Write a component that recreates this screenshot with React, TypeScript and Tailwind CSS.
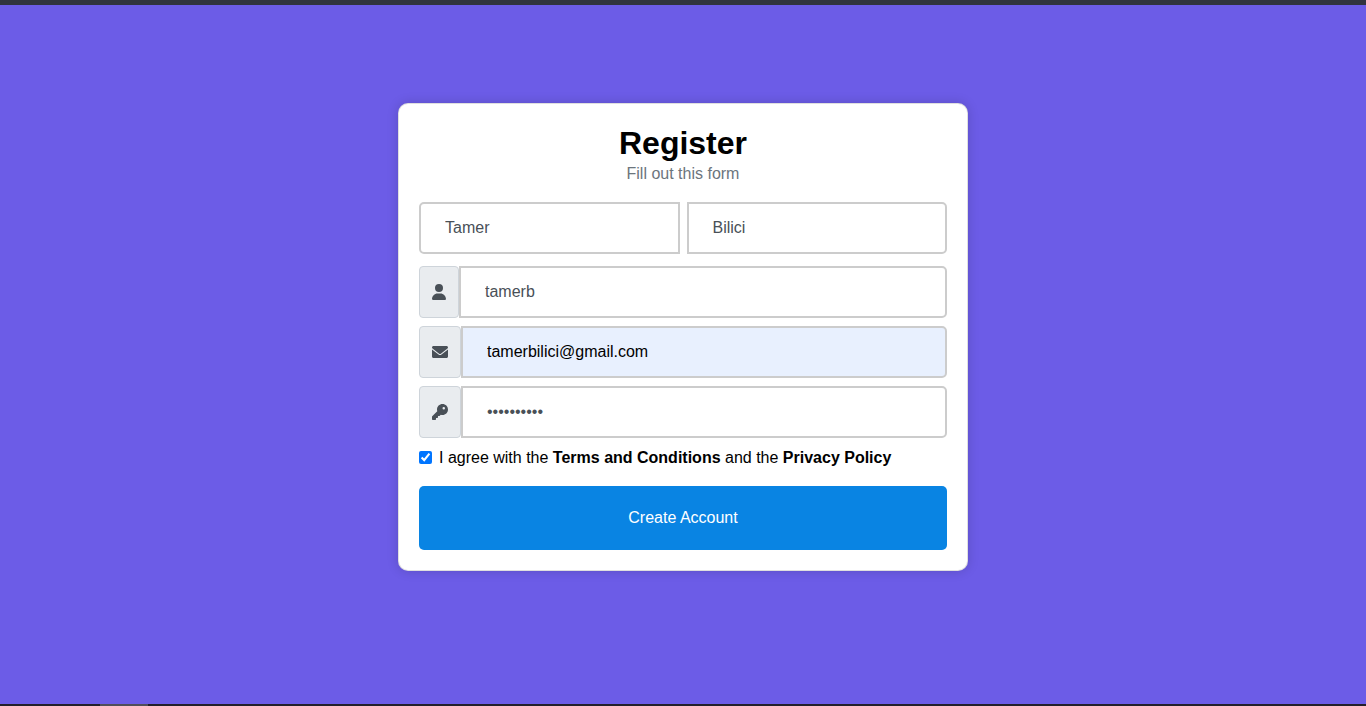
import type { ReactNode } from "react";
import { FaKey, FaUser } from "react-icons/fa6";

const fieldBase =
  "block h-[52px] w-full min-w-0 border-2 border-[#cccccc] px-6 text-base outline-none focus:border-[#0984e3]";

function EnvelopeIcon() {
  return (
    <svg viewBox="0 0 512 512" fill="currentColor" aria-hidden="true" className="size-4">
      <path d="M256 352c-16.53 0-33.06-5.422-47.16-16.41L0 173.2V400C0 426.5 21.49 448 48 448h416c26.51 0 48-21.49 48-48V173.2l-208.8 162.5C289.1 346.6 272.5 352 256 352zM16.29 145.3l212.1 164.1c16.19 12.6 38.87 12.6 55.06 0l212.1-164.1C505.1 137.3 512 125 512 112C512 85.49 490.5 64 464 64h-416C21.49 64 0 85.49 0 112C0 125 6.01 137.3 16.29 145.3z" />
    </svg>
  );
}

type IconFieldProps = {
  id: string;
  label: string;
  type: string;
  value: string;
  icon: ReactNode;
  autoComplete: string;
  tone?: string;
};

function IconField({ id, label, type, value, icon, autoComplete, tone = "bg-white text-[#495057]" }: IconFieldProps) {
  return (
    <div className="flex">
      <label
        htmlFor={id}
        aria-label={label}
        className="flex shrink-0 items-center rounded-[4px] border border-[#ced4da] bg-[#e9ecef] px-3 text-base text-[#495057]"
      >
        {icon}
      </label>
      <input
        id={id}
        type={type}
        defaultValue={value}
        autoComplete={autoComplete}
        className={`${fieldBase} rounded-r-[5px] ${tone}`}
      />
    </div>
  );
}

export default function App() {
  return (
    <div className="flex min-h-screen flex-col bg-[#6c5ce7] font-['Liberation_Sans',Arial,sans-serif] text-base text-black">
      <div className="h-[5px] bg-[#31343f]" />
      <main className="flex-1 px-4 pt-[98px] pb-8">
        <form
          onSubmit={(event) => event.preventDefault()}
          className="mx-auto max-w-[570px] rounded-[10px] border border-black/[0.125] bg-white bg-clip-border p-5 shadow-[0_0_12px_rgba(0,0,0,0.16)]"
        >
          <header className="mb-4 text-center">
            <h1 className="text-[32px] leading-[38px] font-bold">Register</h1>
            <p className="leading-6 text-[#6c757d]">Fill out this form</p>
          </header>

          <div className="mb-3 grid grid-cols-2 gap-[7px]">
            <input
              aria-label="First name"
              type="text"
              defaultValue="Tamer"
              autoComplete="given-name"
              className={`${fieldBase} rounded-l-[5px] bg-white text-[#495057]`}
            />
            <input
              aria-label="Last name"
              type="text"
              defaultValue="Bilici"
              autoComplete="family-name"
              className={`${fieldBase} rounded-r-[5px] bg-white text-[#495057]`}
            />
          </div>

          <div className="mb-2 flex flex-col gap-2">
            <IconField
              id="username"
              label="Username"
              type="text"
              value="tamerb"
              autoComplete="username"
              icon={<FaUser className="h-4 w-3.5" />}
            />
            <IconField
              id="email"
              label="Email"
              type="email"
              value="tamerbilici@gmail.com"
              autoComplete="email"
              tone="bg-[#e8f0fe] text-black"
              icon={<EnvelopeIcon />}
            />
            <IconField
              id="password"
              label="Password"
              type="password"
              value="tamer12345"
              autoComplete="new-password"
              icon={<FaKey className="size-4" />}
            />
          </div>

          <div className="mb-4 flex items-start gap-[7px] leading-6">
            <input id="terms" type="checkbox" defaultChecked className="mt-[5px] size-[13px] shrink-0 accent-[#0075ff]" />
            <label htmlFor="terms">
              I agree with the <a href="#terms-and-conditions" className="font-bold">Terms and Conditions</a> and the{" "}
              <a href="#privacy-policy" className="font-bold">Privacy Policy</a>
            </label>
          </div>

          <button type="submit" className="h-16 w-full cursor-pointer rounded-[5px] bg-[#0984e3] text-white">
            Create Account
          </button>
        </form>
      </main>
      <div className="flex h-0.5 bg-[#221f2b]">
        <div className="ml-[100px] w-12 bg-[#504e59]" />
      </div>
    </div>
  );
}
